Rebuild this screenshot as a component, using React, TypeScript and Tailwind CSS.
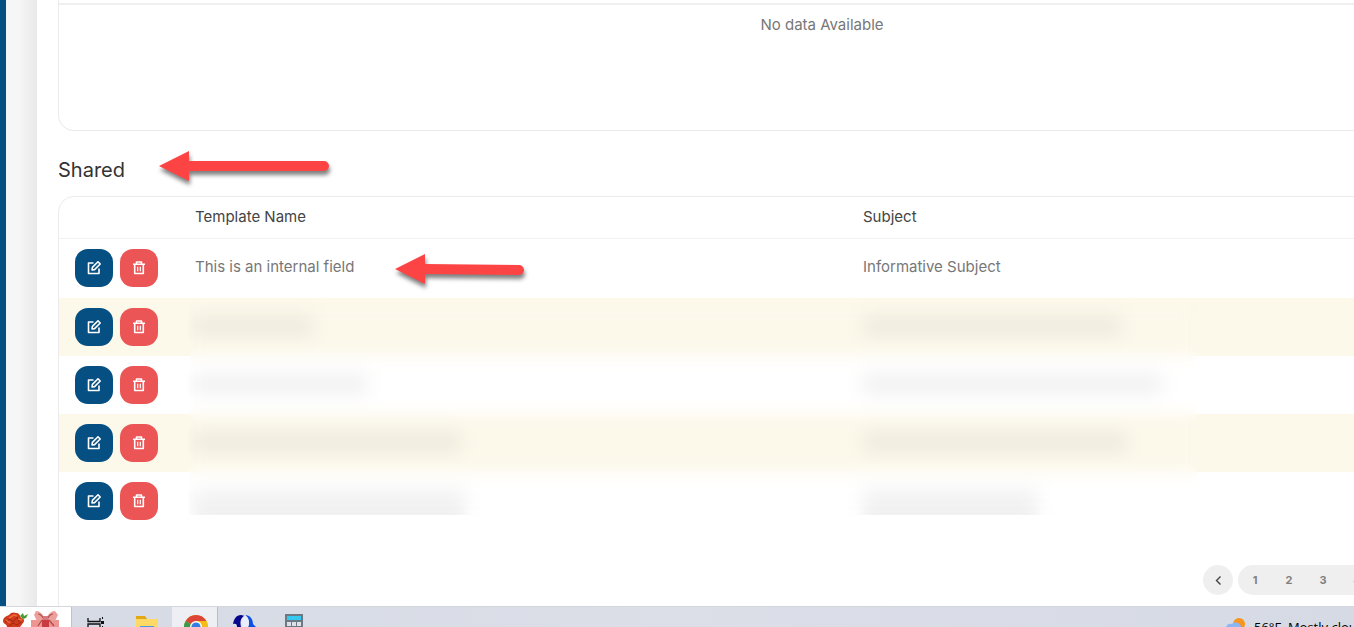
import type { ReactNode } from "react";

type TemplateRow = {
  id: number;
  name?: string;
  subject?: string;
  nameBar?: string;
  subjectBar?: string;
};

const rows: TemplateRow[] = [
  { id: 1, name: "This is an internal field", subject: "Informative Subject" },
  { id: 2, nameBar: "w-[118px] h-5", subjectBar: "w-[258px] h-5" },
  { id: 3, nameBar: "w-[172px] h-5", subjectBar: "w-[298px] h-5" },
  { id: 4, nameBar: "w-[266px] h-5", subjectBar: "w-[264px] h-5" },
  { id: 5, nameBar: "w-[270px] h-8", subjectBar: "w-[174px] h-8" },
];

const pages = [1, 2, 3, 4, 5, 6, 7, 8];

export default function App() {
  return (
    <div className="flex h-screen flex-col overflow-hidden bg-white font-['Inter',sans-serif] text-[#777]">
      <div className="flex min-h-0 flex-1 overflow-hidden">
        {/* Side rail */}
        <div className="w-1.5 shrink-0 bg-[#054f82]" />
        <div className="w-[31px] shrink-0 bg-linear-to-r from-[#f6f6f6] from-40% to-[#e9e9e9]" />

        <main className="min-w-0 flex-1 overflow-hidden pl-[21px]">
          <div className="min-w-[1528px]">
            <section className="h-[131px] rounded-b-2xl border border-t-0 border-[#ebebeb]">
              <div className="h-[5px] border-b-2 border-[#efefef]" />
              <p className="pt-[10px] text-center text-[15px] leading-5">No data Available</p>
            </section>

            <h2 className="pt-[25px] pb-[12px] text-xl leading-7 text-[#333]">Shared</h2>

            <section className="rounded-2xl border border-[#ebebeb]">
              <div className="relative">
                <table className="w-full table-fixed text-left text-[15px] leading-5">
                  <colgroup>
                    <col className="w-[120px]" />
                    <col className="w-[668px]" />
                    <col />
                  </colgroup>
                  <thead>
                    <tr className="h-[41px] border-b border-[#f2f2f2] text-[#444]">
                      <th aria-label="Actions" />
                      <th className="px-4 font-normal">Template Name</th>
                      <th className="px-4 font-normal">Subject</th>
                    </tr>
                  </thead>
                  <tbody>
                    {rows.map((row) => (
                      <tr key={row.id} className="h-[58px] align-top first:h-[60px] even:bg-[#fcf8ea]">
                        <td className="pt-[10px] pl-4">
                          <div className="flex gap-[7px]">
                            <ActionButton label="Edit template" tone="bg-[#054f82]">
                              <path d="M7.500 3H2.500v10.500H13V8.500" />
                              <path d="m6 10 .4-2.600L12 1.800l2.200 2.200-5.600 5.600z" />
                            </ActionButton>
                            <ActionButton label="Delete template" tone="bg-[#ec5556]">
                              <path d="M2 4.200h12M5.500 4V2h5v2M3.700 4.200v9.300h8.600V4.200" />
                              <path d="M6.700 6.700v4.600M9.300 6.700v4.600" strokeWidth="1.200" />
                            </ActionButton>
                          </div>
                        </td>
                        <td className="px-4 pt-[18px]">{row.name ?? <HiddenText size={row.nameBar} />}</td>
                        <td className="px-4 pt-[18px]">{row.subject ?? <HiddenText size={row.subjectBar} />}</td>
                      </tr>
                    ))}
                  </tbody>
                </table>
                {/* privacy blur over the remaining templates */}
                <div className="absolute top-[105px] left-[130px] h-[213px] w-[1008px] backdrop-blur-[8px]" />
                {/* nothing of the last row shows below the blurred area */}
                <div className="absolute top-[318px] left-[130px] h-6 w-[1008px] bg-white" />
              </div>

              <nav aria-label="Pagination" className="flex justify-end gap-[5px] pt-[35px] pr-[40px] pb-8">
                <PageArrow label="Previous page" d="M6.500 1.500 2.500 5.500l4 4" />
                <div className="flex h-[30px] rounded-full bg-[#efefef]">
                  {pages.map((page) => (
                    <button key={page} type="button" className="w-[34px] text-[11px] font-bold text-[#808080]">
                      {page}
                    </button>
                  ))}
                </div>
                <PageArrow label="Next page" d="m2.500 1.500 4 4-4 4" />
              </nav>
            </section>
          </div>
        </main>
      </div>

      <Taskbar />

      <Arrow className="top-[145px] left-[155px]" />
      <Arrow className="top-[248px] left-[391px]" short />
    </div>
  );
}

/* --- small components ----------------------------------------------------- */

function ActionButton({ label, tone, children }: { label: string; tone: string; children: ReactNode }) {
  return (
    <button
      type="button"
      aria-label={label}
      className={`flex size-[38px] items-center justify-center rounded-[13px] text-white ${tone}`}
    >
      <svg
        width="16"
        height="16"
        viewBox="0 0 16 16"
        fill="none"
        stroke="currentColor"
        strokeWidth="1.600"
        strokeLinejoin="round"
      >
        {children}
      </svg>
    </button>
  );
}

function HiddenText({ size }: { size?: string }) {
  return <span className={`block bg-[#777]/10 blur-[4px] ${size}`} />;
}

function PageArrow({ label, d }: { label: string; d: string }) {
  return (
    <button
      type="button"
      aria-label={label}
      className="flex size-[30px] items-center justify-center rounded-full bg-[#efefef] text-[#444]"
    >
      <svg width="9" height="11" viewBox="0 0 9 11" fill="none" stroke="currentColor" strokeWidth="1.400">
        <path d={d} />
      </svg>
    </button>
  );
}

function Arrow({ className, short }: { className: string; short?: boolean }) {
  return (
    <svg
      width="185"
      height="50"
      viewBox="0 0 185 50"
      className={`pointer-events-none absolute drop-shadow-[1px_4px_2px_rgba(0,0,0,0.5)] ${className}`}
      fill="#fd4444"
    >
      {short ? (
        <path d="M4 21 34 6v10l94 1a5 5 0 0 1 0 10l-94-1v10z" />
      ) : (
        <path d="M4 21 34 6v10h135a5 5 0 0 1 0 10H34v10z" />
      )}
    </svg>
  );
}

function Taskbar() {
  return (
    <footer className="flex h-[21px] shrink-0 overflow-hidden border-t border-[#d3d6dd] bg-linear-to-r from-[#d5dae4] via-[#dcdfe8] to-[#d6dae5] text-black">
      <div className="flex w-[72px] shrink-0 border-r border-[#c2c2c2] bg-white">
        <svg width="71" height="20" viewBox="0 0 71 20">
          <path d="M3 14c0-3 3-5 6-6 2-3 5-3 7-2 3 0 4 2 5 5 3 0 4 3 2 5l-3 4H7c0-3-4-3-4-6z" fill="#cf3a1d" />
          <path d="m5 15 5-3 3 3 4-5 2 5M9 19l4-3 4 2 4-3" fill="none" stroke="#9c260f" />
          <path d="m9 11 5-3 3 1M6 13l4 3M18 12l4 1" fill="none" stroke="#f06a3b" strokeWidth="1.500" />
          <path d="m20 9 3-3 1 3 4-2-2 4-3 1z" fill="#4b9b35" />
          <path d="M31 13h28v7H31z" fill="#ee9591" />
          <path d="M42 12h7v8h-7z" fill="#c93b43" />
          <path d="M45 12c-2-5-5-8-9-8l-2 4 3 6zM46 12c2-5 5-8 9-8l3 4-3 6z" fill="#eda09b" />
          <path d="M38 7c2 0 4 2 5 4M53 7c-3 0-4 2-5 4M42 13l-4 6M49 13l5 6" fill="none" stroke="#a84c4a" strokeWidth="1.200" />
          <path d="M43 9h5v4h-5z" fill="#d9797a" />
        </svg>
      </div>
      <TaskIcon label="Task View" width="w-[50px]">
        <path d="M16 11v3.500h12V11M16 20v-3h12v3" fill="none" stroke="#111" strokeWidth="1.300" />
        <path d="M29 14h3v3h-3zM30 10h1v2h-1zM30 19h1v1h-1z" fill="#111" />
      </TaskIcon>
      <TaskIcon label="File Explorer" width="w-[50px]">
        <path d="M14 9h9l2 3h11v8H14z" fill="#e2a713" />
        <path d="M14 12h22v8H14z" fill="#ffd966" />
        <path d="M18 19h14v1H18z" fill="#4a9ae1" />
      </TaskIcon>
      <TaskIcon label="Chrome" width="w-[46px] border-r border-[#b8bdc8] bg-[#edeff4]">
        <circle cx="24" cy="20" r="12" fill="#f4bd17" />
        <path d="M24 20 13.600 14a12 12 0 0 1 20.800 0z" fill="#dd4337" />
        <path d="M24 20v12a12 12 0 0 1-10.400-18z" fill="#3a9b4d" />
        <path d="M24 14h10.400a12 12 0 0 1 1.600 6H24z" fill="#f4bd17" />
        <circle cx="24" cy="20" r="6" fill="#fff" />
        <circle cx="24" cy="20" r="4.600" fill="#347de0" />
      </TaskIcon>
      <TaskIcon label="Web app" width="w-[50px]">
        <path d="M15 17c1-5 3-9 8-9l4 1c-5 2-5 6-4 11h-4c0-3-1-4-4-3z" fill="#05058e" />
        <path d="M27 8c5 0 8 4 8 9l3 3h-8c2-4 1-9-3-12z" fill="#1050e0" />
        <path d="M27 8c4 3 5 8 3 12h-6c-1-5-1-9 3-12z" fill="#e9eefa" />
      </TaskIcon>
      <TaskIcon label="Calculator" width="w-[50px]">
        <path d="M17 7h18v13H17z" fill="#6d7885" />
        <path d="M19 9h14v4H19z" fill="#35c9ef" />
        <path d="M19 15h4v4h-4zM24 15h4v4h-4zM29 15h4v4h-4z" fill="#dce1e8" />
      </TaskIcon>
      <div className="ml-auto flex w-[128px] shrink-0 gap-2">
        <svg width="20" height="20" viewBox="0 0 20 20" className="shrink-0">
          <circle cx="13" cy="17" r="6" fill="#f7951d" />
          <path d="M0 20c1-3 4-4 6-3 3-3 9-1 9 3z" fill="#8ab6f5" />
        </svg>
        <span className="pt-2.5 font-['Open_Sans',sans-serif] text-[13px] leading-5 whitespace-nowrap">
          56°F&nbsp; Mostly cloudy
        </span>
      </div>
    </footer>
  );
}

function TaskIcon({ label, width, children }: { label: string; width: string; children: ReactNode }) {
  return (
    <button type="button" aria-label={label} className={`h-5 shrink-0 overflow-hidden ${width}`}>
      <svg width="48" height="20" viewBox="0 0 48 20" className="max-w-none">
        {children}
      </svg>
    </button>
  );
}
